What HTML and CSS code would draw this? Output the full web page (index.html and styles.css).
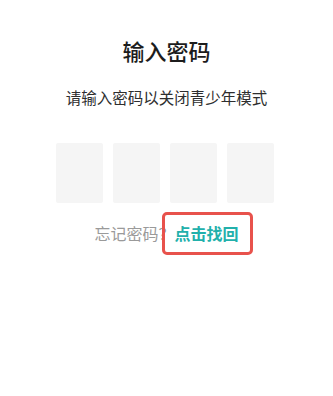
FILE: index.html
```html
<!DOCTYPE html>
<html lang="zh">
<head>
<meta charset="utf-8">
<link rel="stylesheet" href="styles.css">
</head>
<body>
<main class="page">
  <h1 class="title">输入密码</h1>
  <p class="subtitle">请输入密码以关闭青少年模式</p>
  <div class="code">
    <div class="cell"></div>
    <div class="cell"></div>
    <div class="cell"></div>
    <div class="cell"></div>
  </div>
  <p class="forgot">忘记密码？<span class="link">点击找回</span></p>
</main>
</body>
</html>
```
FILE: styles.css
```css
html, body {
  margin: 0;
  padding: 0;
  background: #ffffff;
}
body {
  width: 333px;
  height: 396px;
  overflow: hidden;
  font-family: "Noto Sans CJK SC", "Noto Sans", sans-serif;
}
.page {
  display: flex;
  flex-direction: column;
  align-items: center;
  padding-top: 35px;
}
.title {
  margin: 0;
  font-size: 22px;
  line-height: 30px;
  font-weight: 500;
  color: #1c1c1c;
}
.subtitle {
  margin: 21px 0 0;
  font-size: 15.5px;
  line-height: 22px;
  color: #2e2e2e;
}
.code {
  display: flex;
  gap: 10px;
  margin-top: 35px;
  margin-left: -3px;
}
.cell {
  width: 47px;
  height: 60px;
  background: #f5f5f5;
  border-radius: 2px;
}
.forgot {
  margin: 19px 0 0;
  font-size: 16px;
  line-height: 22px;
  color: #9a9a9a;
  white-space: nowrap;
}
.link {
  position: relative;
  color: #22b0ab;
  font-weight: 700;
}
.link::before {
  content: "";
  position: absolute;
  left: -13px;
  right: -14px;
  top: -9px;
  bottom: -10px;
  border: 3px solid #e8524c;
  border-radius: 5px;
}
```
